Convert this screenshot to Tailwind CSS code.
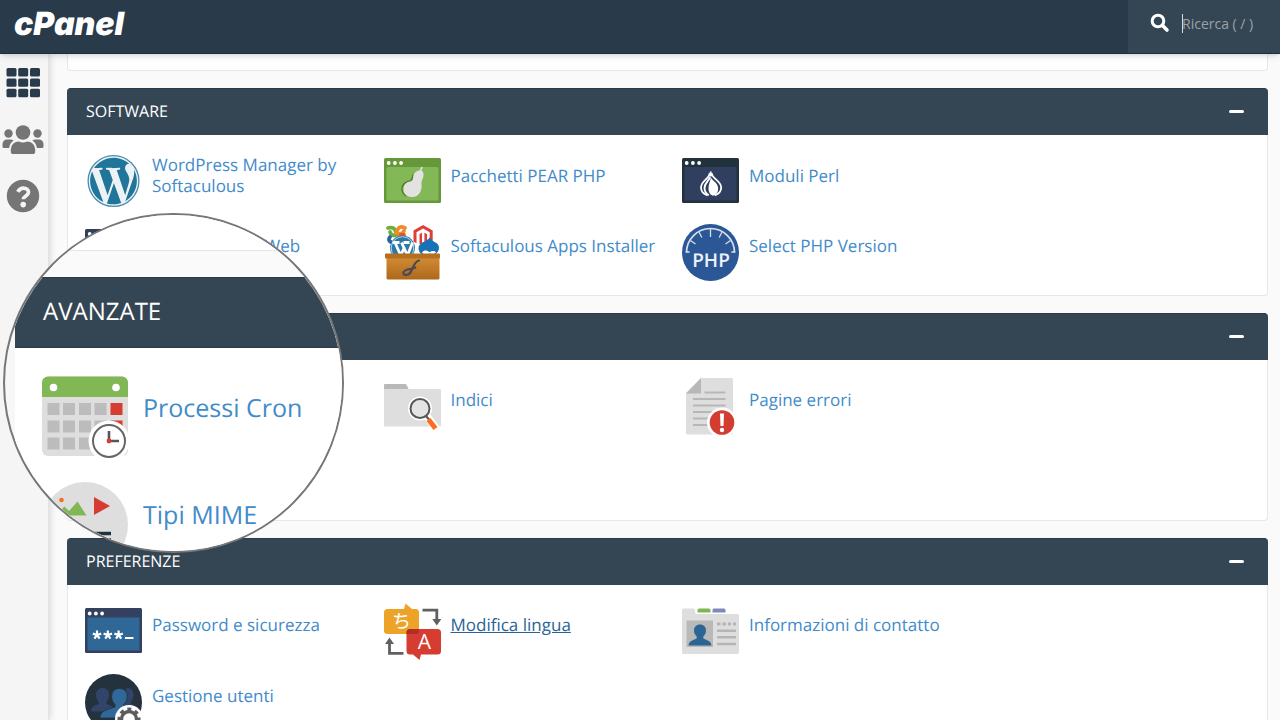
<!DOCTYPE html>
<html lang="it">
<head>
    <meta charset="UTF-8">
    <meta name="viewport" content="width=device-width, initial-scale=1.0">
    <title>cPanel</title>
    <script src="https://cdn.jsdelivr.net/npm/@tailwindcss/browser@4"></script>
</head>
<body class="relative h-screen flex flex-col overflow-hidden bg-[#fafafa] font-['Open_Sans',sans-serif] text-[17px] leading-[21px] text-[#428bca] [text-rendering:geometricPrecision]">
    <header class="relative z-10 h-[54px] shrink-0 flex justify-between bg-[#293a4a] border-b border-[#1f2d3a] shadow-md">
        <a href="#" class="pl-[14px] pt-1 font-['Inter',sans-serif] font-black italic text-[32px] leading-[40px] text-white">cPanel</a>
        <div class="relative w-[152px] flex items-start pt-[13px] pl-[22px] bg-[#344654]">
            <svg class="w-5 h-5 shrink-0" viewBox="0 0 20 20" fill="none" stroke="#fff">
                <circle cx="8" cy="8" r="5.8" stroke-width="3"/>
                <path d="M12.5 12.5 17 17" stroke-width="3.6" stroke-linecap="round"/>
            </svg>
            <input type="text" aria-label="Ricerca" placeholder="Ricerca ( / )" class="ml-3 w-24 h-[21px] text-sm text-white placeholder:text-[#9aa2a9] outline-none">
            <span class="absolute left-[54px] top-[14px] w-px h-[19px] bg-[#d5dade]"></span>
        </div>
    </header>

    <div class="flex flex-1 min-h-0">
        <!-- sidebar -->
        <nav class="w-[49px] shrink-0 pt-3 flex flex-col gap-[18px] bg-[#f5f5f5] border-r border-[#e3e3e3] shadow-[2px_0_6px_rgba(0,0,0,0.12)]">
            <a href="#" aria-label="Strumenti" class="pl-[2px]">
                <svg class="w-[42px] h-[33px]" viewBox="0 0 42 33" fill="#293a4a">
                    <rect x="4.500" y="2" width="10" height="8.400" rx="1.500"/><rect x="16.200" y="2" width="10" height="8.400" rx="1.500"/><rect x="28" y="2" width="10" height="8.400" rx="1.500"/>
                    <rect x="4.500" y="12.400" width="10" height="8.400" rx="1.500"/><rect x="16.200" y="12.400" width="10" height="8.400" rx="1.500"/><rect x="28" y="12.400" width="10" height="8.400" rx="1.500"/>
                    <rect x="4.500" y="22.800" width="10" height="8.400" rx="1.500"/><rect x="16.200" y="22.800" width="10" height="8.400" rx="1.500"/><rect x="28" y="22.800" width="10" height="8.400" rx="1.500"/>
                </svg>
            </a>
            <a href="#" aria-label="Utenti" class="pl-[2px]">
                <svg class="w-[42px] h-[42px]" viewBox="0 0 42 42" fill="#757575">
                    <circle cx="21" cy="15.500" r="7.300"/><circle cx="6.500" cy="16.500" r="4.200"/><circle cx="35.500" cy="16.500" r="4.200"/>
                    <path d="M8.800 34.500V32.500a8 8 0 0 1 8-8q4.200 2 8.400 0a8 8 0 0 1 8 8v2a2.600 2.600 0 0 1-2.600 2.600H11.400a2.600 2.600 0 0 1-2.600-2.600z"/>
                    <path d="M.5 29.500V27a4.600 4.600 0 0 1 4.600-4.600h3.500c1.200 0 2.200.4 3 1.100a11 11 0 0 0-4.500 7.500H2a1.500 1.500 0 0 1-1.500-1.500zM41.500 29.500V27a4.600 4.600 0 0 0-4.600-4.600h-3.500c-1.200 0-2.200.4-3 1.100a11 11 0 0 1 4.500 7.500H40a1.500 1.500 0 0 0 1.500-1.500z"/>
                </svg>
            </a>
            <a href="#" aria-label="Aiuto" class="pl-[2px]">
                <svg class="w-[42px] h-[42px]" viewBox="0 0 42 42">
                    <circle cx="21" cy="19" r="16.200" fill="#757575"/>
                    <path d="M15.800 14.800c1.500-2.700 3.300-3.700 5.500-3.700 2.900 0 5.200 1.700 5.200 4.200 0 3.600-5.200 3.700-5.200 7" fill="none" stroke="#f5f5f5" stroke-width="3.700"/>
                    <circle cx="21.200" cy="27.600" r="2.800" fill="#f5f5f5"/>
                </svg>
            </a>
        </nav>

        <main class="flex-1 min-w-0 pl-[18px] pr-3 flex flex-col gap-[17px]">
            <div class="h-[17px] shrink-0 bg-white border border-t-0 border-[#e7e7e7] rounded-b"></div>

            <section class="shrink-0 bg-white border border-t-0 border-[#e7e7e7] rounded">
                <div class="-mx-px h-[47px] pl-[19px] pr-[20px] pb-[2px] flex items-center justify-between bg-[#344654] border-t border-[#293a4a] rounded-t">
                    <h2 class="text-base text-white">SOFTWARE</h2>
                    <button type="button" aria-label="Comprimi Software" class="w-8 h-8 -mr-1 flex items-center justify-center"><span class="w-[15px] h-[3px] bg-white rounded-sm"></span></button>
                </div>
                <div class="grid grid-cols-4 gap-y-[14px] pl-1 pr-px pt-[18px] pb-[14px]">
                    <a href="#" class="flex items-start gap-[10px] pl-[13px]">
                        <svg class="w-[57px] h-[57px] shrink-0" viewBox="0 0 57 57">
                            <circle cx="28.500" cy="28" r="26" fill="#edf2f5"/>
                            <g transform="translate(2.500 2) scale(2.167)" fill="#21759b">
                                <path d="M21.469 6.825c.84 1.537 1.318 3.3 1.318 5.175 0 3.979-2.156 7.456-5.363 9.325l3.295-9.527c.615-1.54.82-2.771.82-3.864 0-.405-.026-.78-.07-1.11m-7.981.105c.647-.03 1.232-.105 1.232-.105.582-.075.514-.93-.067-.899 0 0-1.755.135-2.88.135-1.064 0-2.85-.15-2.85-.15-.585-.03-.661.855-.075.885 0 0 .54.061 1.125.09l1.68 4.605-2.37 7.08L5.354 6.9c.649-.03 1.234-.1 1.234-.1.585-.075.516-.93-.065-.896 0 0-1.746.138-2.874.138-.2 0-.438-.008-.69-.015C4.911 3.15 8.235 1.215 12 1.215c2.809 0 5.365 1.072 7.286 2.833-.046-.003-.091-.009-.141-.009-1.06 0-1.812.923-1.812 1.914 0 .89.513 1.643 1.06 2.531.411.72.89 1.643.89 2.977 0 .915-.354 1.994-.821 3.479l-1.075 3.585-3.9-11.61zM12 22.784c-1.059 0-2.081-.153-3.048-.437l3.237-9.406 3.315 9.087c.024.053.05.101.078.149-1.12.393-2.325.609-3.582.609M1.211 12c0-1.564.336-3.05.935-4.39L7.29 21.709C3.694 19.96 1.212 16.271 1.211 12"/>
                                <circle cx="12" cy="12" r="11.700" fill="none" stroke="#4d8db0" stroke-width=".6"/>
                            </g>
                        </svg>
                        <span class="min-h-11 flex items-center">WordPress Manager by Softaculous</span>
                    </a>
                    <a href="#" class="flex items-start gap-[10px] pl-[13px]">
                        <svg class="w-[57px] h-[57px] shrink-0" viewBox="0 0 57 57">
                            <rect y="5" width="57" height="45" rx="1.500" fill="#66973b"/>
                            <rect x="2.500" y="14" width="52" height="33.500" rx="1.500" fill="#82b855"/>
                            <g fill="#fff"><circle cx="4.700" cy="10" r="1.900"/><circle cx="10.900" cy="10" r="1.900"/><circle cx="17.100" cy="10" r="1.900"/></g>
                            <path d="M29.500 21.500c-1.800 2.500-.7 5.500-3.500 6.500-4 1-8 3.500-8 8 0 3.200 1.600 5.500 4 7" fill="none" stroke="#4e7a2a" stroke-width="1.300"/>
                            <path d="M36 17.200c.3-2 1-3.200 2.200-3.700l.6 1.400c-.9.500-1.200 1.400-1.300 2.500 2 1 2.600 4 1.600 7-.8 2.600-2 3.600-1.600 6.600.9 6.500-2.500 13-9 13-5.700 0-9-3.300-9-7.800 0-4.600 3-7.400 7-7.600 2.300-.2 2.700-1.800 2.700-4 0-4 2.800-7 6.800-7.400z" fill="#e2e2e2"/>
                        </svg>
                        <span class="min-h-11 flex items-center">Pacchetti PEAR PHP</span>
                    </a>
                    <a href="#" class="flex items-start gap-[10px] pl-[13px]">
                        <svg class="w-[57px] h-[57px] shrink-0" viewBox="0 0 57 57">
                            <rect y="5" width="57" height="45" rx="1.500" fill="#22323d"/>
                            <rect x="2.500" y="14" width="52" height="33.500" fill="#303f60"/>
                            <g fill="#fff"><circle cx="4.700" cy="10" r="1.900"/><circle cx="10.900" cy="10" r="1.900"/><circle cx="17.100" cy="10" r="1.900"/></g>
                            <path d="M28.700 18.500v5M27.700 20c0 6-8.700 7.500-8.700 14.500 0 4 2.800 6.600 6.500 8M29.700 20c0 6 9.500 7.500 9.500 14.500 0 4-2.800 6.600-6.500 8" fill="none" stroke="#fff" stroke-width="1.800"/>
                            <path d="M28 24c-1 4-5.500 6-5.500 11 0 3 1.500 5.500 4.300 7.300" fill="none" stroke="#fff" stroke-width="1.900"/>
                            <path d="M28.700 24c.5 3 7.500 5.500 7.500 11.500 0 3.500-2 6.500-5.200 7.200-3-.7-4.500-4-4.500-7.500 0-4 2-7 2.200-11.200z" fill="#fff"/>
                        </svg>
                        <span class="min-h-11 flex items-center">Moduli Perl</span>
                    </a>
                    <a href="#" class="col-start-1 flex items-start gap-[10px] pl-[13px]">
                        <svg class="w-[57px] h-[57px] shrink-0" viewBox="0 0 57 57">
                            <rect y="5" width="57" height="45" rx="1.500" fill="#303f60"/>
                            <rect x="2.500" y="14" width="52" height="33.500" fill="#2f6796"/>
                            <g fill="#fff"><circle cx="4.700" cy="10" r="1.900"/><circle cx="10.900" cy="10" r="1.900"/><circle cx="17.100" cy="10" r="1.900"/></g>
                        </svg>
                        <span class="min-h-[43px] flex items-center">Ottimizza sito Web</span>
                    </a>
                    <a href="#" class="flex items-start gap-[10px] pl-[13px]">
                        <svg class="w-[57px] h-[57px] shrink-0" viewBox="0 0 57 57">
                            <defs><linearGradient id="crate" x2="0" y2="1"><stop stop-color="#d38c35"/><stop offset="1" stop-color="#ad681a"/></linearGradient></defs>
                            <g fill="none" stroke-width="3.800" stroke-linecap="round" stroke-linejoin="round">
                                <path d="M4 4c4-1 6 0 7 2l3 5M6 8c1 3 3 4 6 3" stroke="#6fae3c"/>
                                <path d="M21 4c-4-2-6-1-7 1l-2 4M20 7c-1 2-3 3-5 3" stroke="#f08a2c"/>
                                <path d="M17 11h3" stroke="#e2542c"/>
                                <path d="M6 13c-2 2-1 4 1 5" stroke="#2764a5"/>
                            </g>
                            <path d="M39 1 48.700 6.500V18l-3 1.500V8.200L39 4.500l-6.500 3.700v11l-3-1.700v-11z" fill="#de3f36"/>
                            <path d="M35.500 10 38 8.800v9.500l1.200.8 1.200-.8V8.800L43 10v10l-3.800 2-3.700-2z" fill="#de3f36"/>
                            <circle cx="18.500" cy="24" r="12.500" fill="#2b79a8"/>
                            <circle cx="18.500" cy="24" r="11.300" fill="none" stroke="#b8d6e7" stroke-width="1"/>
                            <path d="M8.500 18.500h7M19.500 18.500h6M11 18.500l5.700 13L20.500 23M17.500 18.500l6 13 5-13" fill="none" stroke="#fff" stroke-width="2.800"/>
                            <path d="M45.500 13.500c-1 3.500-11 5-11 10.500 0 5.500 4.500 8 10 8s10.500-3 10.500-8.500c0-5.500-7.500-5.500-9.500-10z" fill="#1673b8"/>
                            <path d="M38 28.500c2-3 5-2.500 7.500-.3 2.500-1.800 5-1.700 6.500 0-1.500 2-4 2.400-6 1.300-3 1.800-6 1.500-8-1z" fill="#fff"/>
                            <rect x="2.500" y="33" width="53" height="22.500" rx="1.500" fill="url(#crate)"/>
                            <rect x="1" y="29.500" width="55" height="5" rx="1" fill="#b56f20"/>
                            <path d="M35 36.500c-4 1-5.500 5-7 9s-4.500 6-7.500 5.300c-2.500-1-.5-4.500 2.800-5.300 3-.6 5-.5 8-2" fill="none" stroke="#4a4b54" stroke-width="2.200" stroke-linecap="round"/>
                        </svg>
                        <span class="min-h-[43px] flex items-center">Softaculous Apps Installer</span>
                    </a>
                    <a href="#" class="flex items-start gap-[10px] pl-[13px]">
                        <svg class="w-[57px] h-[57px] shrink-0" viewBox="0 0 57 57">
                            <circle cx="28.500" cy="28.500" r="28.500" fill="#2b5797"/>
                            <path d="M4.500 28.500a24 24 0 0 1 48 0" fill="none" stroke="#d5deea" stroke-width="1.700"/>
                            <path d="M28.500 5v8M17 8l2.800 5.500M40 8l-2.800 5.500M8.500 16.500l5 3.500M48.500 16.500l-5 3.500M3.700 28h4M49.300 28h4" stroke="#d5deea" stroke-width="1.300"/>
                            <text x="29" y="42.500" text-anchor="middle" font-family="Open Sans, sans-serif" font-size="19" font-weight="600" fill="#edf2f8">PHP</text>
                        </svg>
                        <span class="min-h-[43px] flex items-center">Select PHP Version</span>
                    </a>
                </div>
            </section>

            <section class="shrink-0 bg-white border border-t-0 border-[#e7e7e7] rounded">
                <div class="-mx-px h-[47px] pl-[19px] pr-[20px] pb-[2px] flex items-center justify-end bg-[#344654] border-t border-[#293a4a] rounded-t">
                    <button type="button" aria-label="Comprimi Avanzate" class="w-8 h-8 -mr-1 flex items-center justify-center"><span class="w-[15px] h-[3px] bg-white rounded-sm"></span></button>
                </div>
                <div class="grid grid-cols-4 auto-rows-[57px] gap-y-[14px] min-h-[160px] pl-1 pr-px pt-[18px] pb-[14px]">
                    <a href="#" class="col-start-2 flex items-start gap-[10px] pl-[13px]">
                        <svg class="w-[57px] h-[57px] shrink-0" viewBox="0 0 57 57">
                            <path d="M0 12V7a1 1 0 0 1 1-1h20a2 2 0 0 1 1.700.9L25 12z" fill="#b9b9b9"/>
                            <path d="M0 11h56a1 1 0 0 1 1 1v35.500a1 1 0 0 1-1 1H1a1 1 0 0 1-1-1z" fill="#dedede"/>
                            <path d="m42 37 10 13" stroke="#fff" stroke-width="7.500" stroke-linecap="round"/>
                            <circle cx="36" cy="30.500" r="12" fill="#fff"/>
                            <circle cx="36" cy="30.500" r="9.500" fill="#e4e4e4" stroke="#565656" stroke-width="2"/>
                            <path d="m42 38 3 3.500" stroke="#565656" stroke-width="2"/>
                            <path d="m44.500 41.500 7 9" stroke="#fb6c22" stroke-width="5"/>
                        </svg>
                        <span class="min-h-[43px] flex items-center">Indici</span>
                    </a>
                    <a href="#" class="flex items-start gap-[10px] pl-[13px]">
                        <svg class="w-[57px] h-[57px] shrink-0" viewBox="0 0 57 57">
                            <path d="M19 0h30.500a1.500 1.500 0 0 1 1.500 1.500V55a1.500 1.500 0 0 1-1.500 1.500h-44A1.500 1.500 0 0 1 4 55V15z" fill="#dedede"/>
                            <path d="M19 0v15.500H4z" fill="#b7b7b7"/>
                            <path d="M22.500 14.500h21M11 21h32.500M11 27.500h32.500M11 34h32.500M11 40.500h21M11 47h16" stroke="#b7b7b7" stroke-width="2.200"/>
                            <circle cx="40" cy="44.500" r="15" fill="#fff"/>
                            <circle cx="40" cy="44.500" r="12.300" fill="#d33c30"/>
                            <path d="M38 35.500h4l-.5 12.500h-3z" fill="#fff"/><circle cx="40" cy="52" r="2.200" fill="#fff"/>
                        </svg>
                        <span class="min-h-[43px] flex items-center">Pagine errori</span>
                    </a>
                </div>
            </section>

            <section class="shrink-0 bg-white border border-t-0 border-[#e7e7e7] rounded">
                <div class="-mx-px h-[47px] pl-[19px] pr-[20px] pb-[2px] flex items-center justify-between bg-[#344654] border-t border-[#293a4a] rounded-t">
                    <h2 class="text-base text-white">PREFERENZE</h2>
                    <button type="button" aria-label="Comprimi Preferenze" class="w-8 h-8 -mr-1 flex items-center justify-center"><span class="w-[15px] h-[3px] bg-white rounded-sm"></span></button>
                </div>
                <div class="grid grid-cols-4 gap-y-[14px] pl-1 pr-px pt-[18px] pb-[14px]">
                    <a href="#" class="flex items-start gap-[10px] pl-[13px]">
                        <svg class="w-[57px] h-[57px] shrink-0" viewBox="0 0 57 57">
                            <rect y="5" width="57" height="45" rx="1.500" fill="#33415f"/>
                            <rect x="2.500" y="14.500" width="52" height="33" fill="#2f6796"/>
                            <g fill="#fff"><circle cx="4.700" cy="10.500" r="1.900"/><circle cx="10.900" cy="10.500" r="1.900"/><circle cx="17.100" cy="10.500" r="1.900"/></g>
                            <path d="M12 32v-4.500M12 32l4.200-1.400M12 32l2.600 3.600M12 32l-2.600 3.600M12 32l-4.200-1.400M22.800 32v-4.500M22.800 32l4.200-1.400M22.800 32l2.600 3.600M22.800 32l-2.600 3.600M22.800 32l-4.200-1.400M33.600 32v-4.500M33.600 32l4.200-1.400M33.600 32l2.600 3.600M33.600 32l-2.600 3.600M33.600 32l-4.200-1.400" stroke="#fff" stroke-width="2.200"/>
                            <path d="M40 35h8.500" stroke="#fff" stroke-width="2"/>
                        </svg>
                        <span class="min-h-[43px] flex items-center">Password e sicurezza</span>
                    </a>
                    <a href="#" class="flex items-start gap-[10px] pl-[13px] text-[#2a6496] underline">
                        <svg class="w-[57px] h-[57px] shrink-0" viewBox="0 0 57 57">
                            <path d="M3.500 6H20l1.500-5.500L28 6h3.500A3.500 3.500 0 0 1 35 9.500v18a3.500 3.500 0 0 1-3.500 3.500h-28A3.500 3.500 0 0 1 0 27.500v-18A3.500 3.500 0 0 1 3.500 6z" fill="#eca327"/>
                            <path d="M26 26h27.500a3.500 3.500 0 0 1 3.500 3.500V48a3.500 3.500 0 0 1-3.500 3.500H37L35.500 57l-6.500-5.500h-3a3.500 3.500 0 0 1-3.500-3.500V29.500A3.500 3.500 0 0 1 26 26z" fill="#d63c30"/>
                            <path d="M26 26h9v1.500a3.500 3.500 0 0 1-3.500 3.500h-9v-1.500A3.500 3.500 0 0 1 26 26z" fill="#b12e28"/>
                            <text x="17.500" y="25" text-anchor="middle" font-family="Noto Sans CJK JP, sans-serif" font-size="19" fill="#fff">ち</text>
                            <text x="40.500" y="45.500" text-anchor="middle" font-family="Open Sans, sans-serif" font-size="21" fill="#fff">A</text>
                            <path d="M38.500 7.200h14.300v10M19.500 50.300H5.500V40" fill="none" stroke="#606060" stroke-width="2.800"/>
                            <path d="M48.300 16h9L52.800 22.500zM1 41h9L5.500 34.500z" fill="#606060"/>
                        </svg>
                        <span class="min-h-[43px] flex items-center">Modifica lingua</span>
                    </a>
                    <a href="#" class="flex items-start gap-[10px] pl-[13px]">
                        <svg class="w-[57px] h-[57px] shrink-0" viewBox="0 0 57 57">
                            <path d="M15.500 12V7a1.500 1.500 0 0 1 1.500-1.500h10A1.500 1.500 0 0 1 28.500 7v2.500h-13z" fill="#7fb655"/>
                            <path d="M30.500 12V7A1.500 1.500 0 0 1 32 5.500h10A1.500 1.500 0 0 1 43.500 7v2.500h-13z" fill="#8286bd"/>
                            <path d="M1.500 5.500h9.700c.8 0 1.300.5 1.500 1.200l1 4.300h41.800a1.500 1.500 0 0 1 1.500 1.500v37a1.500 1.500 0 0 1-1.500 1.500h-54A1.500 1.500 0 0 1 0 49.500V7a1.500 1.500 0 0 1 1.500-1.500z" fill="#dedede"/>
                            <rect x="4.500" y="17.500" width="26.500" height="26.500" fill="#b9b9b9"/>
                            <path d="M18 21.500c3.700 0 6 2.400 6 6 0 2.800-1.200 4.600-2.700 6v1.700c1 1.700 8 1.700 8.200 7.300h-23c.2-5.600 7.200-5.600 8.200-7.300v-1.700c-1.500-1.400-2.700-3.200-2.700-6 0-3.600 2.300-6 6-6z" fill="#2c6594"/>
                            <path d="M35 21h3.500M40.500 21H44M46 21h3M51 21h3" stroke="#b5b5b5" stroke-width="3"/>
                            <path d="M35 27.700h19M35 34.300h19M35 41h19" stroke="#b5b5b5" stroke-width="2.600"/>
                        </svg>
                        <span class="min-h-[43px] flex items-center">Informazioni di contatto</span>
                    </a>
                    <a href="#" class="col-start-1 flex items-start gap-[10px] pl-[13px]">
                        <svg class="w-[57px] h-[57px] shrink-0" viewBox="0 0 57 57">
                            <circle cx="28.500" cy="28.500" r="28.500" fill="#24323d"/>
                            <path d="M17.500 14c4 0 6.500 2.500 6.500 7 0 3-1 5-2.500 6.500v2c2 2 8 2 8 8H6c0-6 6-6 7.700-8v-2C12 26 11 24 11 21c0-4.500 2.500-7 6.500-7zM42 14c4 0 6.500 2.500 6.500 7 0 3-1 5-2.500 6.500v2c1.500 2 7 2 7.500 7H32z" fill="#33446a"/>
                            <path d="M34.500 14.500c5 0 7.700 3.200 7.700 8 0 3.700-1.400 6.200-3.400 8v2.500c2 2.500 9 3 9 11H15c0-8 9-8.500 15-11v-2.500c-2-1.800-3.300-4.300-3.300-8 0-4.800 2.700-8 7.800-8z" fill="#2f6899" stroke="#24323d" stroke-width=".8"/>
                            <circle cx="44" cy="45" r="14" fill="#fff"/>
                            <circle cx="44" cy="45" r="7.500" fill="none" stroke="#5c5c5c" stroke-width="3.400"/>
                            <circle cx="44" cy="45" r="10" fill="none" stroke="#5c5c5c" stroke-width="3" stroke-dasharray="4 3.854" stroke-dashoffset="2"/>
                        </svg>
                        <span class="min-h-[43px] flex items-center">Gestione utenti</span>
                    </a>
                </div>
            </section>
        </main>
    </div>

    <!-- magnifying lens over the page -->
    <div class="absolute z-20 left-[3px] top-[213px] w-[341px] h-[340px] rounded-full overflow-hidden border-2 border-[#777] bg-[#f7f7f7] text-[25px] leading-8">
        <div class="h-9 bg-white border-b border-[#e5e5e5]"></div>
        <div class="h-[26px] bg-[#fafafa]"></div>
        <div class="ml-[10px] bg-white">
            <div class="h-[71px] pl-7 pb-[2px] flex items-center bg-[#344654] border-y border-[#293a4a]">
                <h2 class="text-2xl text-white">AVANZATE</h2>
            </div>
            <div class="flex flex-col gap-[21px] pl-[27px] pt-[27px]">
                <a href="#" class="flex items-start gap-[15px]">
                    <svg class="w-[86px] h-[86px] shrink-0" viewBox="0 0 86 86">
                        <rect y="1.500" width="86" height="79.500" rx="6" fill="#dedede"/>
                        <path d="M0 22V7.500a6 6 0 0 1 6-6h74a6 6 0 0 1 6 6V22z" fill="#82b755"/>
                        <circle cx="11.500" cy="12.500" r="3.800" fill="#fff"/><circle cx="74" cy="12.500" r="3.800" fill="#fff"/>
                        <path d="M5.500 34h12M21 34h12M37 34h12M52.500 34h12M5.500 51.500h12M21 51.500h12M37 51.500h12M52.500 51.500h12M5.500 68.500h12M21 68.500h12M37 68.500h12" stroke="#bcbcbc" stroke-width="12"/>
                        <path d="M68.500 34h12M68.500 51.500h12" stroke="#d63c30" stroke-width="12"/>
                        <circle cx="67" cy="66" r="20.500" fill="#fff"/>
                        <circle cx="67" cy="66" r="16" fill="#fff" stroke="#666" stroke-width="2"/>
                        <path d="M67 56v10h10" fill="none" stroke="#555" stroke-width="2.600"/>
                        <circle cx="67" cy="66" r="2.400" fill="#d63c30"/>
                    </svg>
                    <span class="h-[65px] flex items-center">Processi Cron</span>
                </a>
                <a href="#" class="flex items-start gap-[15px]">
                    <svg class="w-[86px] h-[86px] shrink-0" viewBox="0 0 86 86">
                        <circle cx="43" cy="43" r="43" fill="#dedede"/>
                        <circle cx="19.500" cy="18" r="2.300" fill="#f96a25"/>
                        <path d="m13 33.500 9.500-9 4.500 4.500 8.500-9.500 9 14z" fill="#82b755"/>
                        <path d="m52 15 16 9-16 9z" fill="#d63c30"/>
                        <path d="M52 51.500h17M52 58h17" stroke="#22323d" stroke-width="3.500"/>
                    </svg>
                    <span class="h-[65px] flex items-center">Tipi MIME</span>
                </a>
            </div>
        </div>
    </div>
</body>
</html>
